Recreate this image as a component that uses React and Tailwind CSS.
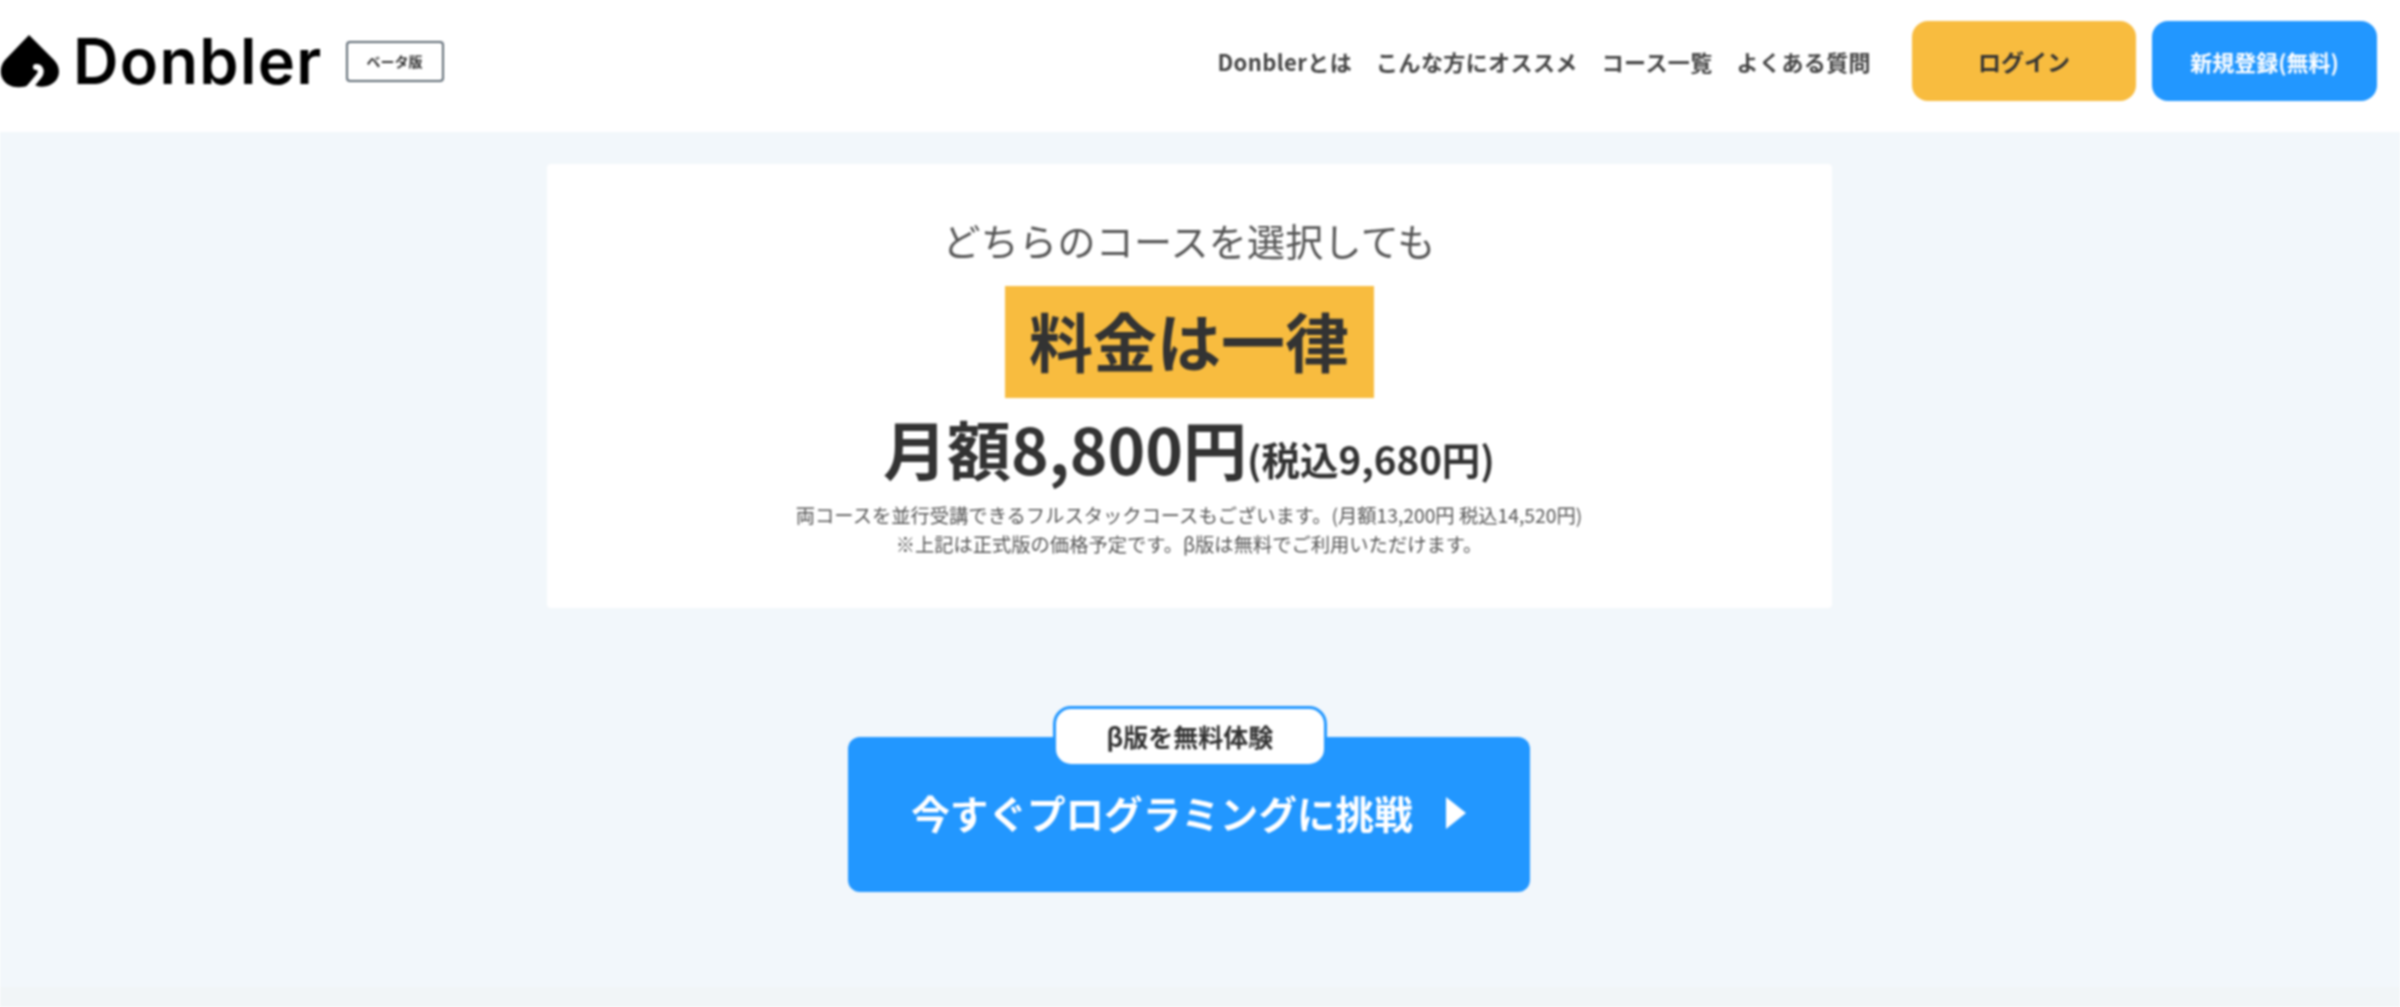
import React from "react";

const font = { fontFamily: '"Noto Sans CJK JP", "Noto Sans", sans-serif' };

const navItems = ["Donblerとは", "こんな方にオススメ", "コース一覧", "よくある質問"];

const LogoMark = () => (
  <svg width="60" height="54" viewBox="0 0 60 54" className="shrink-0">
    <path
      fill="#000"
      d="M29 1 L54 26 C62 34 60 47 50 51 C43 54 35 53 31 48 L29 51 C23 54 14 54 9 51 C0 47 -2 34 5 26 Z"
    />
    <path fill="none" stroke="#fff" strokeWidth="6" strokeLinecap="round" d="M29 54 L39 42 C42 38 41 33 36 33" />
  </svg>
);

const Header = () => (
  <header className="h-[132px] bg-white flex items-center pr-[23px] pb-[10px]">
    <div className="flex items-center">
      <LogoMark />
      <span className="ml-[13px] text-[63px] leading-none font-semibold text-black tracking-[1.3px] font-['Inter']">
        Donbler
      </span>
      <span className="ml-[23px] w-[98px] h-[41px] border-2 border-[#5f6b75] rounded-[4px] flex items-center justify-center text-[14px] font-bold text-[#333]">
        ベータ版
      </span>
    </div>
    <nav className="ml-auto flex items-center gap-[24px] text-[22px] font-bold text-[#444] tracking-[0.4px]">
      {navItems.map((item) => (
        <span key={item}>{item}</span>
      ))}
    </nav>
    <div className="ml-[41px] flex gap-[16px]">
      <button className="w-[224px] h-[80px] rounded-[16px] bg-[#f8bc3f] text-[23px] font-bold text-[#333]">
        ログイン
      </button>
      <button className="w-[225px] h-[80px] rounded-[16px] bg-[#2297ff] text-[22px] font-bold text-white">
        新規登録(無料)
      </button>
    </div>
  </header>
);

const PriceCard = () => (
  <section className="w-[1285px] h-[444px] bg-white rounded-[4px] flex flex-col items-center text-[#333]">
    <p className="mt-[52px] text-[38px] leading-[48px] text-[#555] tracking-[0.3px]">どちらのコースを選択しても</p>
    <div className="mt-[22px] w-[369px] h-[112px] bg-[#f8bc3f] pb-[6px] flex items-center justify-center text-[64px] font-bold leading-none">
      料金は一律
    </div>
    <p className="mt-[3px] flex items-baseline font-bold leading-[92px]">
      <span className="text-[64px]">月額8,800円</span>
      <span className="text-[38.5px]">(税込9,680円)</span>
    </p>
    <p className="-mt-[3px] text-[19.3px] leading-[29px] text-center text-[#555]">
      両コースを並行受講できるフルスタックコースもございます。(月額13,200円 税込14,520円)
      <br />
      ※上記は正式版の価格予定です。β版は無料でご利用いただけます。
    </p>
  </section>
);

const Cta = () => (
  <div className="relative mt-[98px] pt-[31px]">
    <button className="w-[682px] h-[155px] rounded-[12px] bg-[#2297ff] text-white flex items-start justify-center pt-[45px]">
      <span className="text-[38.6px] leading-[60px] font-bold">今すぐプログラミングに挑戦</span>
      <svg width="22" height="34" viewBox="0 0 22 34" className="ml-[32px] mt-[14px]">
        <path fill="#fff" d="M1 1 L21 17 L1 33 Z" />
      </svg>
    </button>
    <div className="absolute top-0 left-[205px] w-[274px] h-[61px] bg-white border-[3px] border-[#2297ff] rounded-[18px] flex items-center justify-center text-[25px] font-bold text-[#333]">
      β版を無料体験
    </div>
  </div>
);

export default function App() {
  return (
    <div style={font} className="h-[1007px] w-full overflow-hidden bg-[#f2f7fb] flex flex-col blur-[0.8px]">
      <Header />
      <main className="flex-1 flex flex-col items-center pt-[32px] pr-[22px]">
        <PriceCard />
        <Cta />
      </main>
      <div className="h-[20px] bg-[#f1f5f7]" />
    </div>
  );
}
